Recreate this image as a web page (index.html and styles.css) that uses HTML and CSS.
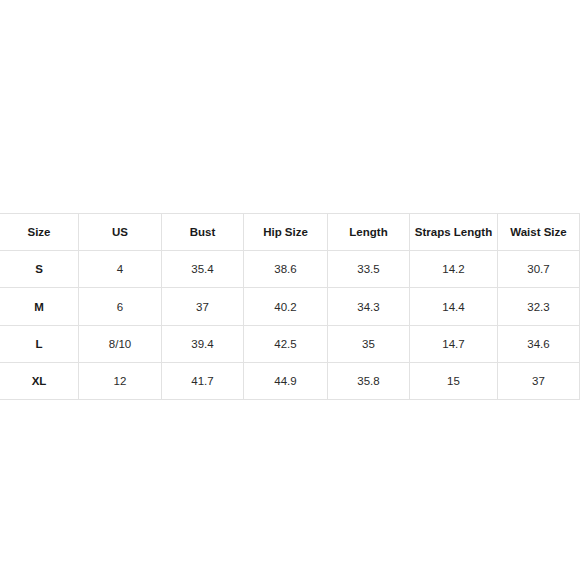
FILE: index.html
```html
<!DOCTYPE html>
<html>
<head>
<meta charset="utf-8">
<link rel="stylesheet" href="styles.css">
</head>
<body>
<div class="chart">
  <div class="cell head">Size</div>
  <div class="cell head">US</div>
  <div class="cell head">Bust</div>
  <div class="cell head">Hip Size</div>
  <div class="cell head">Length</div>
  <div class="cell head">Straps Length</div>
  <div class="cell head">Waist Size</div>

  <div class="cell head">S</div>
  <div class="cell">4</div>
  <div class="cell">35.4</div>
  <div class="cell">38.6</div>
  <div class="cell">33.5</div>
  <div class="cell">14.2</div>
  <div class="cell">30.7</div>

  <div class="cell head">M</div>
  <div class="cell">6</div>
  <div class="cell">37</div>
  <div class="cell">40.2</div>
  <div class="cell">34.3</div>
  <div class="cell">14.4</div>
  <div class="cell">32.3</div>

  <div class="cell head">L</div>
  <div class="cell">8/10</div>
  <div class="cell">39.4</div>
  <div class="cell">42.5</div>
  <div class="cell">35</div>
  <div class="cell">14.7</div>
  <div class="cell">34.6</div>

  <div class="cell head">XL</div>
  <div class="cell">12</div>
  <div class="cell">41.7</div>
  <div class="cell">44.9</div>
  <div class="cell">35.8</div>
  <div class="cell">15</div>
  <div class="cell">37</div>
</div>
</body>
</html>
```
FILE: styles.css
```css
html, body {
  margin: 0;
  padding: 0;
  background: #ffffff;
}
body {
  width: 580px;
  height: 580px;
  overflow: hidden;
  font-family: "Liberation Sans", Arial, sans-serif;
}
.chart {
  display: grid;
  grid-template-columns: 78px 82px 81px 83px 81px 87px 81px;
  grid-template-rows: 36px 36px 37px 36px 36px;
  gap: 1px;
  padding: 1px;
  background: #e2e2e2;
  width: max-content;
  margin: 213px 0 0 -1px;
}
.cell {
  background: #ffffff;
  display: flex;
  align-items: center;
  justify-content: center;
  font-size: 11.5px;
  color: #2a2a2a;
  white-space: nowrap;
}
.head {
  font-weight: bold;
  color: #1a1a1a;
}
```
